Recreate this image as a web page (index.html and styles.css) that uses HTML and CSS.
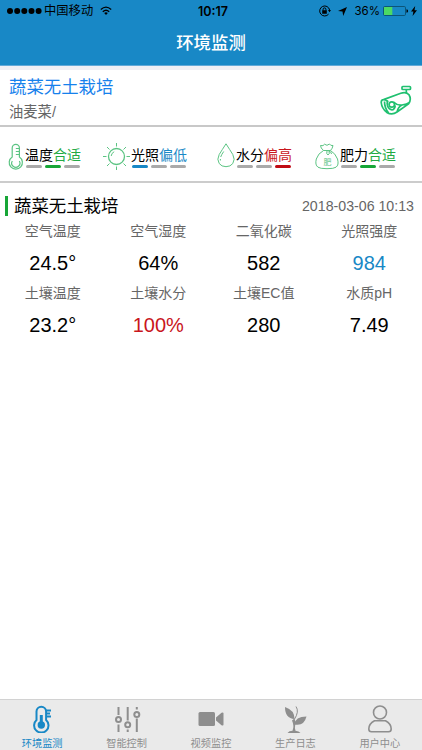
FILE: index.html
```html
<!DOCTYPE html>
<html lang="zh-CN">

<head>
    <meta charset="UTF-8">
    <meta name="viewport" content="width=device-width, initial-scale=1.0">
    <title>环境监测</title>
    <link rel="stylesheet" href="styles.css">
</head>

<body>
    <header class="header">
        <div class="status-bar">
            <div class="status-left">
                <svg width="35" height="8" viewBox="0 0 35 8"><circle cx="3" cy="4" r="3"/><circle cx="10.2" cy="4" r="3"/><circle cx="17.3" cy="4" r="3"/><circle cx="24.5" cy="4" r="3"/><circle cx="31.6" cy="4" r="3"/></svg>
                <span class="carrier">中国移动</span>
                <svg class="wifi" width="12" height="10" viewBox="0 0 12 10"><path d="M.8 3.5Q6-1.2 11.2 3.5M2.8 5.7Q6 2.8 9.2 5.7" fill="none" stroke="#000" stroke-width="1.3"/><path d="M4.2 7Q6 5.7 7.8 7L6 9z"/></svg>
            </div>
            <div class="clock">10:17</div>
            <div class="status-right">
                <svg width="12" height="12" viewBox="0 0 12 12"><path d="M10.6 5A5 5 0 1 0 9.6 9.1" fill="none" stroke="#000"/><path d="M9 5h3l-1.5 2.2zM3.2 5.2h4.6v3.5H3.2z"/><path d="M4.1 5.5V4.3a1.4 1.4 0 0 1 2.8 0v1.2" fill="none" stroke="#000"/></svg>
                <svg class="locate" width="9" height="9" viewBox="0 0 9 9"><path d="M9 0L5.2 9 4.5 4.6 0 4z"/></svg>
                <span class="percent">36%</span>
                <svg class="battery" width="26" height="10" viewBox="0 0 26 10"><rect x=".5" y=".5" width="22" height="9" rx="1.2" fill="none" stroke="#0c5578"/><rect x="1" y="1" width="8.3" height="8" fill="#4cd964"/><path d="M23.5 3.3q1.6.1 1.6 1.7t-1.6 1.7z"/></svg>
                <svg width="6" height="10" viewBox="0 0 6 10"><path d="M4.2 0L0 5.6h2.4L1.6 10 6 4.2H3.5z"/></svg>
            </div>
        </div>
        <h1>环境监测</h1>
    </header>

    <main>
        <section class="base">
            <div>
                <h2>蔬菜无土栽培</h2>
                <p>油麦菜/</p>
            </div>
            <svg class="camera" width="32" height="30" viewBox="0 0 32 30" fill="none" stroke="#20c070" stroke-width="1.7"><rect x="22" y="1.5" width="8.500" height="3" rx=".8"/><path d="M26.300 5v3.400M3.500 14.600L20.800 8.300Q26 6.500 29 9.800Q31.800 14.500 28.500 19L17 27Q12 30.500 6.800 27.400Q1.800 23.500 1.200 17.500Q1.200 14.600 3.500 14.600Q5.500 14.600 7.500 16.300M4.500 16.500Q4.500 23 8.500 27.800M13.500 17Q17 20.500 22 20T29.500 17.500M22 20Q18 22 17 27"/><path d="M8 15.500Q6.500 18 7.500 21Q9.500 25.500 13 24.700Q15.500 23 15 20.500"/><circle cx="11.800" cy="19.500" r="2.700"/></svg>
        </section>

        <section class="levels">
            <div class="level">
                <svg class="thermo" width="16" height="27" viewBox="0 0 16 27" fill="none" stroke="#5cc483" stroke-width="1.200"><path d="M4.200 14V5a3.600 3.600 0 0 1 7.200 0v9a6.600 6.600 0 1 1-7.200 0zM7.800 5.500h3M7.800 8.500h3M7.800 11.500h3"/><path d="M4.300 18a4.100 4.100 0 1 0 7 0"/></svg>
                <div>
                    <div class="level-text">温度<span class="green">合适</span></div>
                    <div class="bars"><i></i><i class="on-green"></i><i></i></div>
                </div>
            </div>
            <div class="level">
                <svg width="27" height="27" viewBox="0 0 27 27" fill="none" stroke="#5cc483"><circle cx="13.500" cy="13.500" r="8" stroke-width="1.300"/><path d="M13.500 0v3.500M13.500 23.500v3.500M0 13.500h3.500M23.500 13.500h3.500M4 4l2.500 2.500M20.500 20.500L23 23M4 23l2.500-2.500M20.500 6.500L23 4M8.200 13a5.300 5.300 0 0 1 3-4.300"/></svg>
                <div>
                    <div class="level-text">光照<span class="blue">偏低</span></div>
                    <div class="bars"><i class="on-blue"></i><i></i><i></i></div>
                </div>
            </div>
            <div class="level">
                <svg width="18" height="25" viewBox="0 0 18 25" fill="none" stroke="#5cc483"><path d="M9 .8Q13 7 15.800 11.500Q18.500 16.500 15.800 20.500Q13.500 23.700 9 23.700T2.200 20.500Q-.5 16.500 2.200 11.500Q5 7 9 .8zM3.700 14Q4.500 11.500 6.700 8.500M3.400 16v1.500"/></svg>
                <div>
                    <div class="level-text">水分<span class="red">偏高</span></div>
                    <div class="bars"><i></i><i></i><i class="on-red"></i></div>
                </div>
            </div>
            <div class="level">
                <svg width="24" height="27" viewBox="0 0 24 27" fill="none" stroke="#5cc483"><path d="M8.500 7.500Q5.500 5 5.500 2.500Q8.500 3.500 9.500 1.200Q12 3.500 14.500 1Q15.500 3 18 2.500Q17.500 5.500 15.500 7.500zM8.500 7.500Q3 10.500 1.300 16Q-.2 22 3 24.200Q5 25.700 12 25.700T21 24.200Q24.200 22 22.500 16Q20.500 10.500 15.500 7.500M12 8q-1 3 1 4q2-1 1-4M14 8q2.500 1 2.500 3"/><text x="12.500" y="21.500" class="bag-text">肥</text></svg>
                <div>
                    <div class="level-text">肥力<span class="green">合适</span></div>
                    <div class="bars"><i></i><i class="on-green"></i><i></i></div>
                </div>
            </div>
        </section>

        <section class="monitor">
            <div class="monitor-title">
                <h3>蔬菜无土栽培</h3>
                <time>2018-03-06 10:13</time>
            </div>
            <dl class="readings">
                <div><dt>空气温度</dt><dd>24.5°</dd></div>
                <div><dt>空气湿度</dt><dd>64%</dd></div>
                <div><dt>二氧化碳</dt><dd>582</dd></div>
                <div><dt>光照强度</dt><dd class="blue">984</dd></div>
                <div><dt>土壤温度</dt><dd>23.2°</dd></div>
                <div><dt>土壤水分</dt><dd class="red">100%</dd></div>
                <div><dt>土壤EC值</dt><dd>280</dd></div>
                <div><dt>水质pH</dt><dd>7.49</dd></div>
            </dl>
        </section>
    </main>

    <nav class="tabs">
        <a class="tab active">
            <svg width="28" height="28" viewBox="0 0 28 28" fill="none" stroke="currentColor" stroke-width="2"><path d="M8.500 15V6.500a4.800 4.800 0 0 1 9.600 0V15a7.200 7.200 0 1 1-9.600 0zM18.500 5.500h4.500M18.500 8.500h3.500M18.500 11.500h4.500"/><circle cx="13.300" cy="20" r="3.700" fill="currentColor" stroke="none"/><path d="M13.300 10v9" stroke-width="3"/></svg>
            <span>环境监测</span>
        </a>
        <a class="tab">
            <svg width="28" height="28" viewBox="0 0 28 28" fill="none" stroke="currentColor" stroke-width="2"><path d="M5.500 2v8M5.500 19.500V27M14.700 2v13.500M14.700 24.500V27M23.800 2v2.500M23.800 13.500V27"/><circle cx="5.500" cy="14.500" r="2.500"/><circle cx="14.700" cy="19.800" r="2.500"/><circle cx="23.800" cy="9.500" r="2.500"/></svg>
            <span>智能控制</span>
        </a>
        <a class="tab">
            <svg width="28" height="28" viewBox="0 0 28 28" fill="currentColor"><rect x="1.500" y="7" width="16.500" height="14" rx="1.500"/><path d="M19 12.500l5.500-4.700Q26.500 7 26.500 8.500v11q0 1.500-2 .7L19 15.500z"/></svg>
            <span>视频监控</span>
        </a>
        <a class="tab">
            <svg width="28" height="28" viewBox="0 0 28 28" fill="currentColor"><path d="M4 2Q13.500 5 13.500 14Q4 13.500 4 2zM13.500 19.500Q14 11.500 25.500 11.500Q23 21.500 13.500 19.500zM6.500 28Q8 25.700 11.500 25.700Q13.500 21 11 15.500L13.500 13.500Q14.500 16 14.300 19Q13.500 23 14.500 25.700Q18 26 19.500 28z"/><path d="M13.300 14.500Q18.500 6.500 15 1.500" fill="none" stroke="currentColor"/></svg>
            <span>生产日志</span>
        </a>
        <a class="tab">
            <svg width="28" height="28" viewBox="0 0 28 28" fill="none" stroke="currentColor" stroke-width="1.600"><circle cx="14" cy="7.500" r="6.500"/><path d="M8.500 15.800h11q5.700 3 5.700 8.200q0 2.700-2.700 2.700h-17q-2.700 0-2.700-2.700q0-5.200 5.700-8.200z" stroke-linejoin="round"/></svg>
            <span>用户中心</span>
        </a>
    </nav>
</body>

</html>
```
FILE: styles.css
```css
* {
    box-sizing: border-box;
}

body {
    display: flex;
    flex-direction: column;
    height: 750px;
    margin: 0;
    overflow: hidden;
    background-color: #fff;
    color: #000;
    font-family: "Liberation Sans", "Noto Sans CJK SC", sans-serif;
}

h1,
h2,
h3,
p,
dl,
dd {
    margin: 0;
    font-weight: normal;
}

svg {
    display: block;
    flex-shrink: 0;
}

main {
    flex: 1;
}

.header {
    height: 66px;
    background-color: #1888c6;
    border-bottom: 1px solid #62a9d8;
}

.status-bar {
    display: grid;
    grid-template-columns: 1fr auto 1fr;
    align-items: center;
    height: 22px;
    padding: 0 5px 0 7px;
}

.status-left,
.status-right {
    display: flex;
    align-items: center;
}

.status-right {
    justify-content: flex-end;
}

.carrier {
    margin: 0 7px 0 2px;
    line-height: 18px;
    font-size: 12.3px;
}

.clock {
    padding-left: 2px;
    font-family: Inter, "Liberation Sans", sans-serif;
    font-weight: 600;
    font-size: 12.5px;
}

.percent {
    font-family: Inter, "Liberation Sans", sans-serif;
    font-size: 11.5px;
}

.locate {
    margin: 0 7px;
}

.battery {
    margin: 0 2px 0 3px;
}

.header h1 {
    height: 43px;
    line-height: 43px;
    text-align: center;
    font-size: 17.4px;
    font-weight: 500;
    color: #fff;
}

.base {
    display: flex;
    justify-content: space-between;
    height: 61px;
    padding: 6px 10px 0 9px;
    border-top: 4px solid #efeff4;
    border-bottom: 2px solid #c8c8c8;
}

.base h2 {
    line-height: 22px;
    font-size: 17.4px;
    color: #1681ec;
}

.base p {
    padding-top: 4px;
    line-height: 20px;
    font-size: 14.3px;
    color: #666;
}

.camera {
    margin-top: 9px;
}

.levels {
    display: grid;
    grid-template-columns: 95px 114px 98px 1fr;
    height: 56px;
    padding: 16px 0 0 8px;
    border-bottom: 2px solid #ccc;
}

.level {
    display: flex;
    align-items: flex-start;
}

.level-text {
    height: 22px;
    padding-left: 1px;
    line-height: 24px;
    font-size: 14px;
    white-space: nowrap;
}

.bars {
    display: flex;
    gap: 3px;
    padding-left: 2px;
}

.bars i {
    width: 16px;
    height: 3px;
    border-radius: 2px;
    background-color: #aaa;
}

.bars .on-green {
    background-color: #17a637;
}

.bars .on-blue {
    background-color: #1888c6;
}

.bars .on-red {
    background-color: #c00c14;
}

.bag-text {
    fill: #5cc483;
    stroke: none;
    font-size: 8px;
    text-anchor: middle;
}

.green {
    color: #22aa44;
}

.blue {
    color: #1888c6;
}

.red {
    color: #c9161d;
}

.monitor {
    padding-top: 13px;
}

.monitor-title {
    display: flex;
    align-items: center;
    justify-content: space-between;
    height: 20px;
    margin: 0 8px 0 5px;
    padding-left: 6px;
    border-left: 3px solid #17a637;
}

.monitor-title h3 {
    line-height: 20px;
    font-size: 17.4px;
}

.monitor-title time {
    font-size: 14.2px;
    color: #666;
}

.readings {
    display: grid;
    grid-template-columns: repeat(4, 1fr);
    text-align: center;
}

.readings div {
    height: 61.5px;
}

.readings dt {
    height: 31px;
    line-height: 30px;
    font-size: 14px;
    color: #666;
}

.readings dd {
    line-height: 32px;
    font-size: 20px;
}

.tabs {
    display: grid;
    grid-template-columns: repeat(5, 1fr);
    height: 51px;
    background-color: #eaeaea;
    border-top: 1px solid #d2d2d2;
}

.tab {
    display: flex;
    flex-direction: column;
    align-items: center;
    padding-top: 5px;
    font-size: 10.2px;
    color: #8e8e8e;
}

.tab span {
    line-height: 21px;
}

.tab.active {
    color: #1888c6;
}
```
